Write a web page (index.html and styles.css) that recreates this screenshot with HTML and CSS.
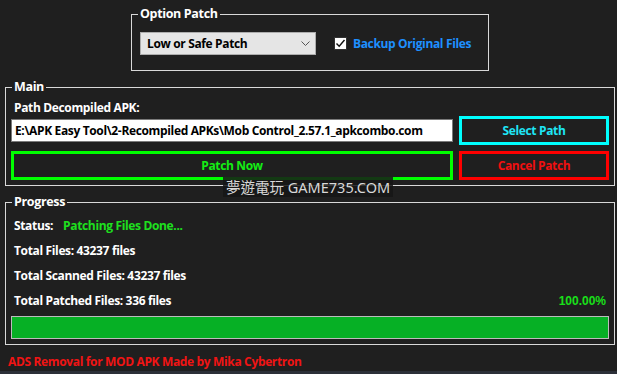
FILE: index.html
```html
<!DOCTYPE html>
<html>
<head>
  <meta charset="utf-8">
  <title>ADS Removal for MOD APK</title>
  <link rel="stylesheet" href="styles.css">
</head>
<body>
  <div class="window">
    <fieldset class="group option-group">
      <legend>Option Patch</legend>
      <div class="option-row">
        <div class="combo">
          <span>Low or Safe Patch</span>
          <svg class="chevron" width="9" height="5" viewBox="0 0 9 5"><path d="M0.5 0.5 L4.5 4.5 L8.5 0.5" fill="none" stroke="#555" stroke-width="1"/></svg>
        </div>
        <label class="check">
          <span class="box">
            <svg width="11" height="11" viewBox="0 0 11 11"><path d="M1.5 5.5 L4.2 8.3 L9.5 2" fill="none" stroke="#111" stroke-width="1.4"/></svg>
          </span>
          <span class="check-text">Backup Original Files</span>
        </label>
      </div>
    </fieldset>

    <fieldset class="group main-group">
      <legend>Main</legend>
      <div class="path-label">Path Decompiled APK:</div>
      <div class="row path-row">
        <div class="path-input">E:\APK Easy Tool\2-Recompiled APKs\Mob Control_2.57.1_apkcombo.com</div>
        <div class="btn btn-cyan">Select Path</div>
      </div>
      <div class="row">
        <div class="btn btn-green btn-wide">Patch Now</div>
        <div class="btn btn-red">Cancel Patch</div>
      </div>
    </fieldset>

    <fieldset class="group progress-group">
      <legend>Progress</legend>
      <div class="stat"><span>Status:</span><span class="status-ok">Patching Files Done...</span></div>
      <div class="stat">Total Files: 43237 files</div>
      <div class="stat">Total Scanned Files: 43237 files</div>
      <div class="stat stat-last">
        <span>Total Patched Files: 336 files</span>
        <span class="percent">100.00%</span>
      </div>
      <div class="bar"><div class="bar-fill" style="width: 100%;"></div></div>
    </fieldset>

    <div class="credit">ADS Removal for MOD APK Made by Mika Cybertron</div>
    <div class="taskbar"></div>

    <div class="watermark">夢遊電玩 GAME735.COM</div>
  </div>
</body>
</html>
```

FILE: styles.css
```css
* {
  box-sizing: border-box;
}
body {
  margin: 0;
  background: #1f1f1f;
}
.window {
  position: relative;
  width: 617px;
  height: 374px;
  padding-top: 6px;
  background: #1f1f1f;
  color: #fff;
  font-family: "Open Sans", "Noto Sans", sans-serif;
  font-weight: 700;
  font-size: 12px;
  letter-spacing: -0.35px;
  overflow: hidden;
}
.group {
  margin: 0;
  padding: 0 5px;
  border: 1px solid #d8d8d8;
  min-width: 0;
}
.group legend {
  margin-left: 1px;
  padding: 0 2px;
  line-height: 16px;
  font-size: 12.5px;
}
.option-group {
  margin-left: 131px;
  width: 358px;
  height: 65px;
}
.option-row {
  display: flex;
  align-items: center;
  margin-top: 10px;
  margin-left: 3px;
}
.combo {
  display: flex;
  align-items: center;
  justify-content: space-between;
  width: 176px;
  height: 23px;
  padding: 0 5px 0 6px;
  background: #e5e5e5;
  border: 1px solid #adadad;
  color: #000;
}
.check {
  display: flex;
  align-items: center;
  margin-left: 18px;
}
.box {
  display: flex;
  align-items: center;
  justify-content: center;
  width: 13px;
  height: 13px;
  background: #fff;
  border: 1px solid #333;
}
.check-text {
  margin-left: 6px;
  color: #1e90ff;
}
.main-group {
  margin-top: 8px;
  margin-left: 5px;
  width: 610px;
  height: 107px;
}
.path-label {
  margin-top: 5px;
  margin-left: 3px;
  line-height: 16px;
}
.row {
  display: flex;
  align-items: center;
  gap: 6px;
}
.path-row {
  height: 29px;
}
.path-input {
  width: 442px;
  height: 23px;
  padding-left: 3px;
  line-height: 21px;
  background: #fff;
  border: 1px solid #7a7a7a;
  color: #000;
  white-space: nowrap;
  overflow: hidden;
}
.btn {
  display: flex;
  align-items: center;
  justify-content: center;
  width: 150px;
  height: 29px;
  border: 3px solid;
}
.btn-wide {
  width: 442px;
}
.btn-cyan {
  border-color: #00ffff;
  color: #1ee6f5;
}
.btn-green {
  margin-top: 6px;
  border-color: #00ff00;
  color: #14ee14;
}
.btn-red {
  margin-top: 6px;
  border-color: #ff0000;
  color: #f01010;
}
.progress-group {
  margin-top: 8px;
  margin-left: 5px;
  width: 610px;
  height: 151px;
}
.stat {
  display: flex;
  margin-left: 3px;
  height: 25px;
  line-height: 24px;
}
.stat:first-of-type {
  margin-top: 4px;
}
.status-ok {
  margin-left: 10px;
  color: #1ee01e;
}
.stat-last {
  justify-content: space-between;
  margin-right: 3px;
}
.percent {
  font-family: "Liberation Sans", sans-serif;
  font-size: 12px;
  letter-spacing: 0;
  color: #19e019;
}
.bar {
  margin-top: 2px;
  height: 23px;
  border: 1px solid #bcbcbc;
  background: #e6e6e6;
}
.bar-fill {
  height: 100%;
  background: #06b025;
}
.credit {
  margin-top: 9px;
  margin-left: 8px;
  line-height: 16px;
  color: #f01414;
}
.taskbar {
  position: absolute;
  left: 0;
  right: 0;
  bottom: 0;
  height: 3px;
  background: #2c3038;
}
.watermark {
  position: absolute;
  left: 223px;
  top: 177px;
  width: 170px;
  height: 20px;
  padding-left: 3px;
  background: rgba(22, 22, 22, 0.85);
  color: #d8d8d8;
  font-family: "Noto Sans", "Noto Sans CJK TC", sans-serif;
  font-weight: 400;
  font-size: 14.5px;
  letter-spacing: 0;
  line-height: 20px;
  white-space: nowrap;
}
```
